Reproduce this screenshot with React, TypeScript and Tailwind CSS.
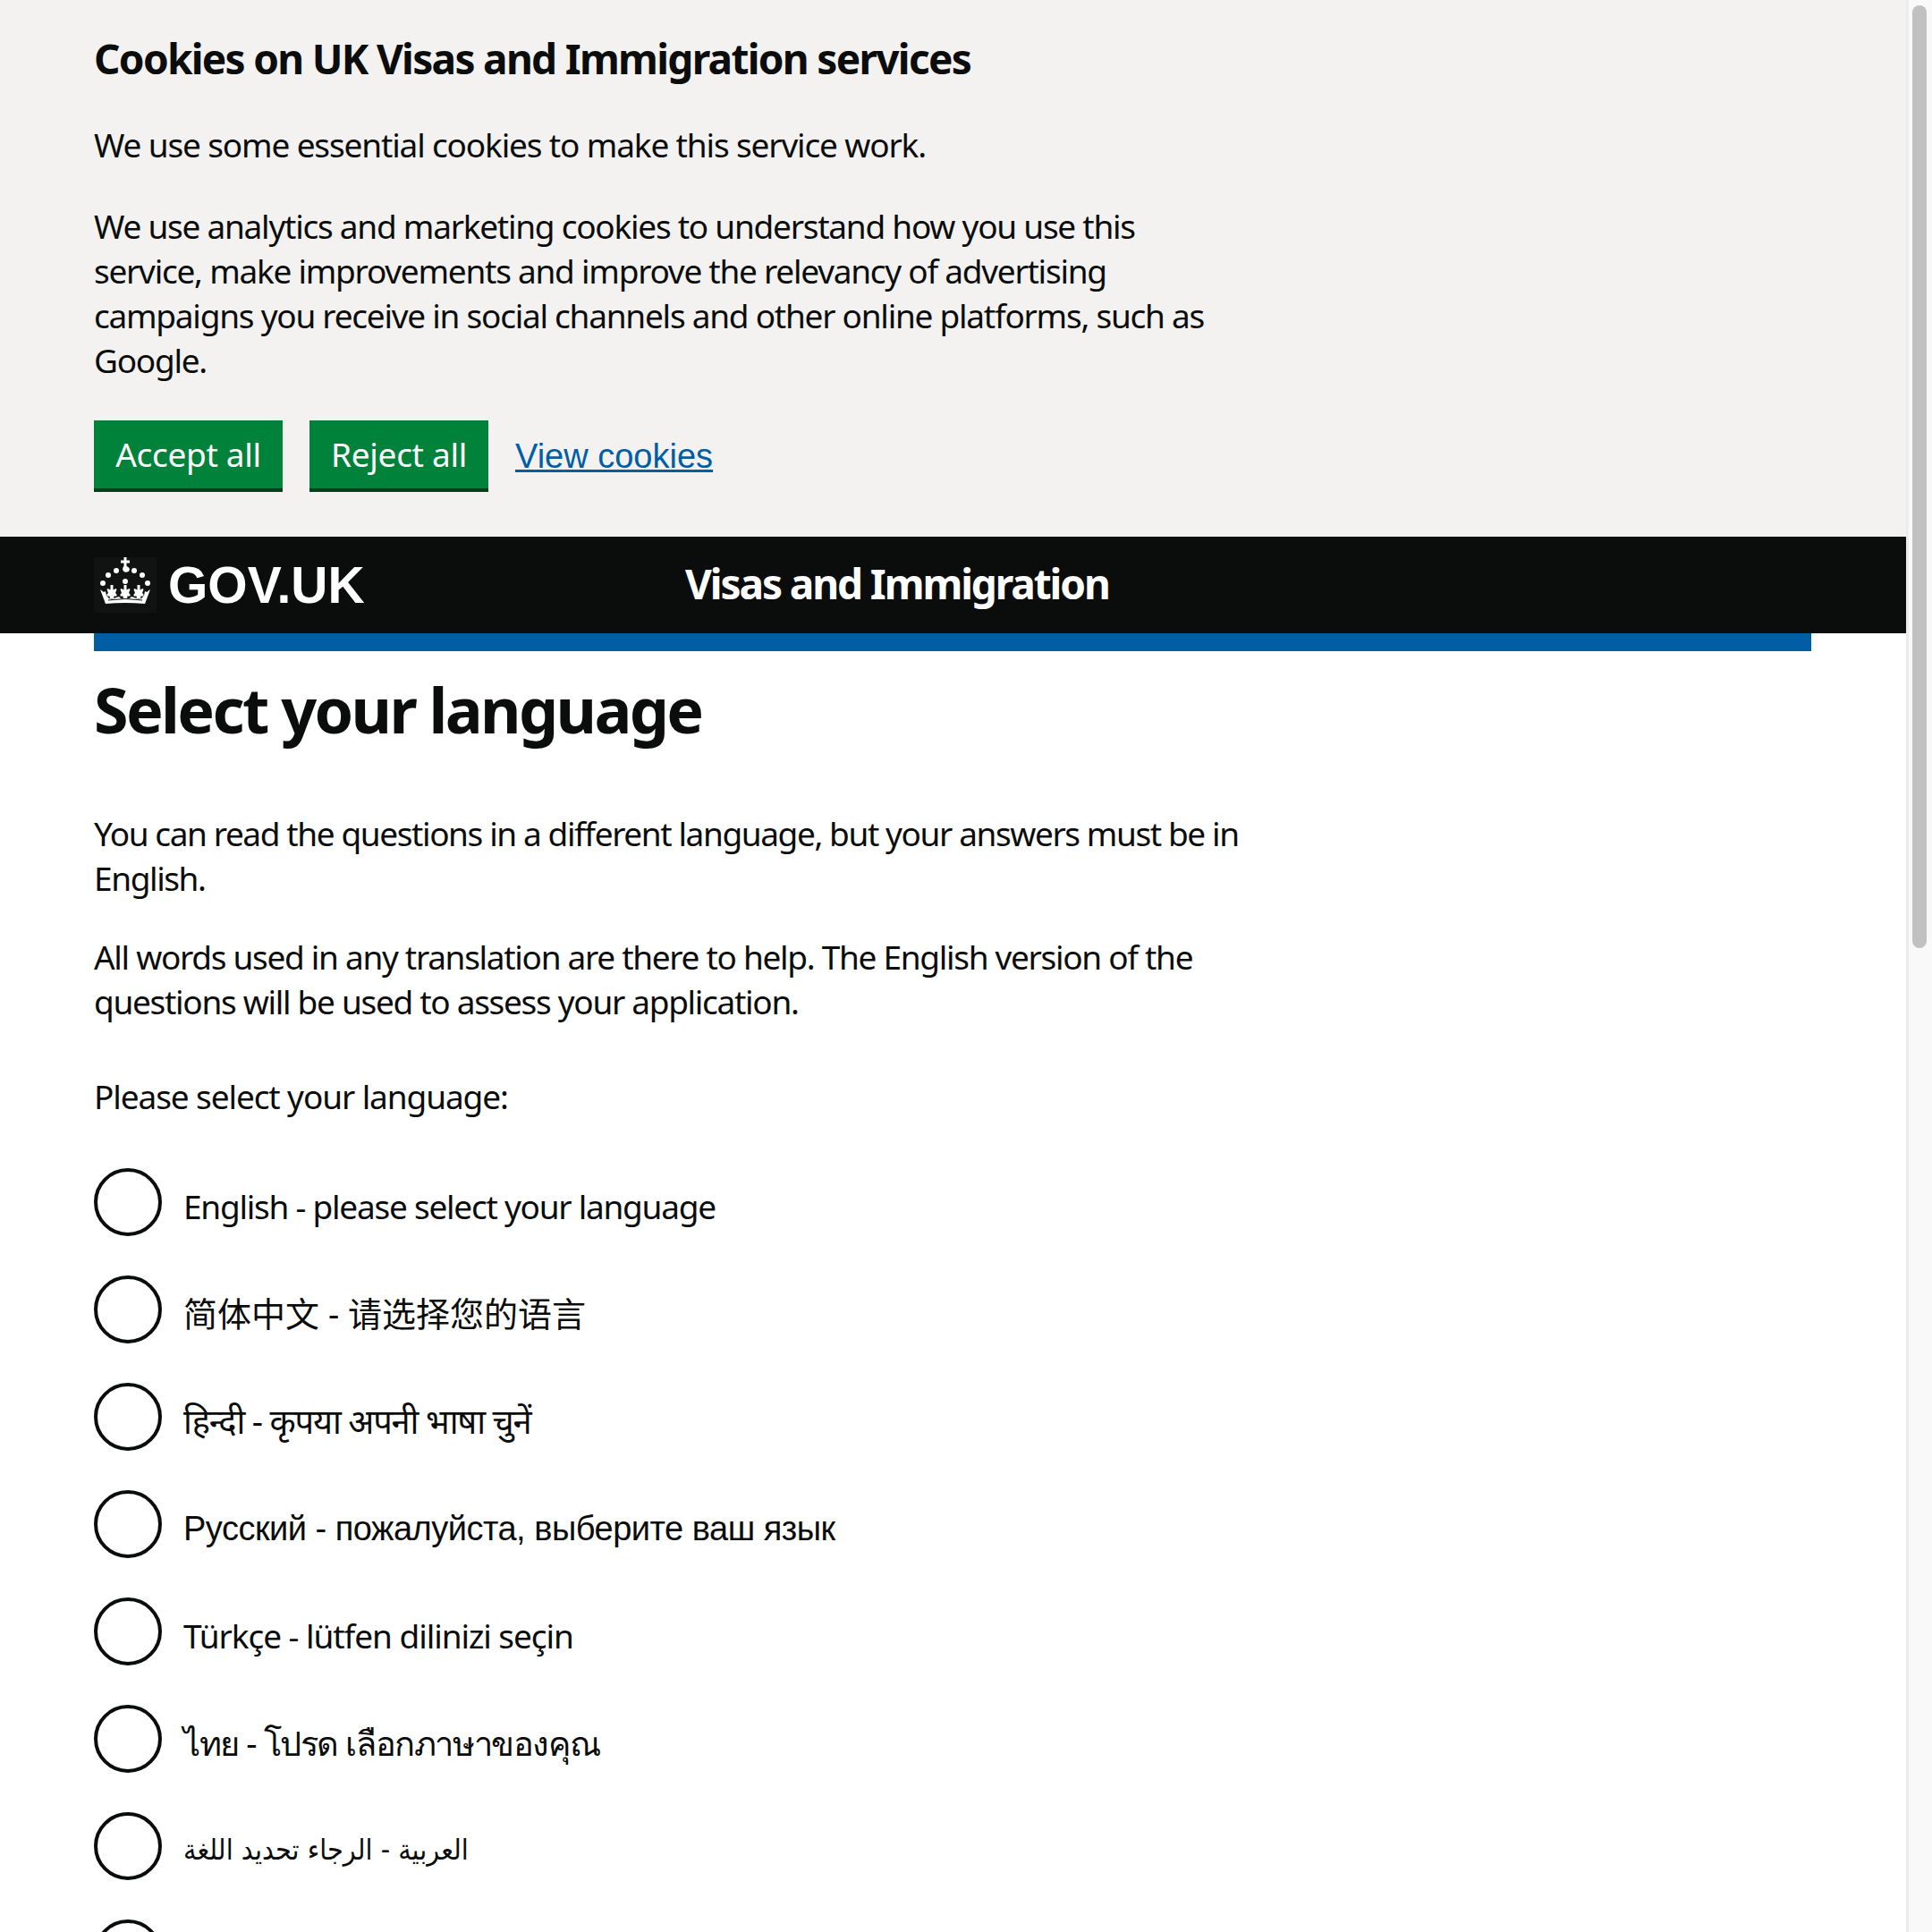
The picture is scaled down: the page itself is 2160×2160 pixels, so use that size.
import React from "react";

const body = "pt-[10px] text-[37px] tracking-[-1.25px] font-['Noto_Sans',sans-serif]";

const languages = [
  { label: "English - please select your language", font: body },
  { label: "简体中文 - 请选择您的语言", font: "pt-[8px] text-[38px] font-['Noto_Sans','Noto_Sans_CJK_SC',sans-serif]" },
  { label: "हिन्दी - कृपया अपनी भाषा चुनें", font: "pt-[8px] text-[38px] tracking-[-1.2px] font-['Noto_Sans',sans-serif]" },
  { label: "Русский - пожалуйста, выберите ваш язык", font: "pt-[10px] text-[38px] tracking-[-0.5px] font-['Liberation_Sans',sans-serif]" },
  { label: "Türkçe - lütfen dilinizi seçin", font: "pt-[10px] text-[37px] tracking-[-1.05px] font-['Noto_Sans',sans-serif]" },
  { label: "ไทย - โปรด เลือกภาษาของคุณ", font: "pt-[7px] text-[38px] tracking-[-1.4px] font-['Noto_Sans',sans-serif]" },
  { label: "العربية - الرجاء تحديد اللغة", font: "pt-[7px] text-[32px] font-['DejaVu_Sans_Condensed','DejaVu_Sans',sans-serif]" },
  // the next row is cut off by the bottom of the page, only its radio shows
  { label: "", font: body },
];

function Fleur({ x }: { x: number }) {
  return (
    <path d={`M${x - 1.5} 31h3v5.500l3-1.500 1 1-1.500 4 1.500 1.500v2h-3l-.5 3h-4l-.5-3h-3v-2l1.500-1.500-1.500-4 1-1 3 1.500z`} />
  );
}

function Crown() {
  return (
    <svg viewBox="0 0 70 62" className="h-[62px] w-[70px] bg-[#111212]" fill="#fff">
      <path d="M33.500 0h3v3.500h3.500v3h-3.500v3.500c3 1 4 3 3 5-1 1.500-3 2-5 1.500-2-.5-3-3-2-5 .5-1 1-1.500 1-1.500V6.500H30v-3h3.500z" />
      <circle cx="25" cy="15" r="3" />
      <circle cx="45" cy="15" r="3" />
      <circle cx="16" cy="20" r="3" />
      <circle cx="54" cy="20" r="3" />
      <circle cx="10" cy="29" r="3" />
      <circle cx="60" cy="29" r="3" />
      <circle cx="35" cy="27" r="3" />
      <Fleur x={20} />
      <Fleur x={35} />
      <Fleur x={50} />
      <path d="M7 36l4 3 2-1 1 5 3 3 3 1 5-2 3-1 2 2h10l2-2 3 1 5 2 3-1 3-3 1-5 2 1 4-3-3 8-3 8q-22-2-44 0l-3-8z" />
      <path d="M16 48q19-3 38 0" fill="none" stroke="#111212" strokeWidth="1" />
    </svg>
  );
}

export default function App() {
  return (
    <div className="flex h-[2160px] w-[2160px] overflow-hidden bg-white font-['Noto_Sans',sans-serif] text-[37px] leading-[50px] text-[#0b0c0c]">
      <div className="w-[2131px] shrink-0">
        <section className="h-[600px] bg-[#f3f2f1] px-[105px] pt-[35px]">
          <h2 className="text-[46px] leading-[60px] font-bold tracking-[-1.7px]">Cookies on UK Visas and Immigration services</h2>
          <div className="w-[1280px] tracking-[-1.25px]">
            <p className="mt-[42px] tracking-[-1.15px]">We use some essential cookies to make this service work.</p>
            <p className="mt-[41px]">
              We use analytics and marketing cookies to understand how you use this service, make improvements and improve the relevancy of advertising campaigns you receive in social channels and other online platforms, such as Google.
            </p>
          </div>
          <div className="mt-[42px] flex items-center gap-[30px] tracking-[-0.3px]">
            <button className="h-[80px] w-[211px] border-b-4 border-[#00401e] bg-[#00823b] text-white">Accept all</button>
            <button className="h-[80px] w-[200px] border-b-4 border-[#00401e] bg-[#00823b] text-white">Reject all</button>
            <a href="#" className="font-['Liberation_Sans',sans-serif] text-[38px] tracking-normal text-[#005ea5] underline">View cookies</a>
          </div>
        </section>

        <header className="flex h-[108px] items-center bg-[#0b0c0c] pl-[105px] text-white">
          <Crown />
          <span className="ml-[13px] w-[578px] font-['Liberation_Sans',sans-serif] text-[57px] font-bold">GOV.UK</span>
          <span className="-mt-[4px] text-[46px] font-bold tracking-[-2.1px]">Visas and Immigration</span>
        </header>

        <main className="px-[105px]">
          <div className="h-[20px] w-[1920px] bg-[#005ea5]" />
          <h1 className="mt-[25px] text-[70px] leading-[80px] font-bold tracking-[-2.65px]">Select your language</h1>
          <div className="w-[1300px] tracking-[-1.25px]">
            <p className="mt-[74px] tracking-[-1.4px]">You can read the questions in a different language, but your answers must be in English.</p>
            <p className="mt-[38px] tracking-[-1.3px]">All words used in any translation are there to help. The English version of the questions will be used to assess your application.</p>
            <p className="mt-[56px] tracking-[-1.1px]">Please select your language:</p>
          </div>
          <ul className="mt-[55px] flex flex-col gap-[44px]">
            {languages.map((lang, i) => (
              <li key={i} className="flex h-[76px] items-center gap-[24px]">
                <span className="h-[76px] w-[76px] shrink-0 rounded-full border-4 border-[#0b0c0c]" />
                {lang.label && <span dir="ltr" className={lang.font}>{lang.label}</span>}
              </li>
            ))}
          </ul>
        </main>
      </div>

      <div className="flex h-full flex-1 border-l-[3px] border-[#ececec] bg-[#f9f9f9] pt-[6px] pl-[4px]">
        <div className="h-[1054px] w-[16px] rounded-full bg-[#c1c1c1]" />
      </div>
    </div>
  );
}
